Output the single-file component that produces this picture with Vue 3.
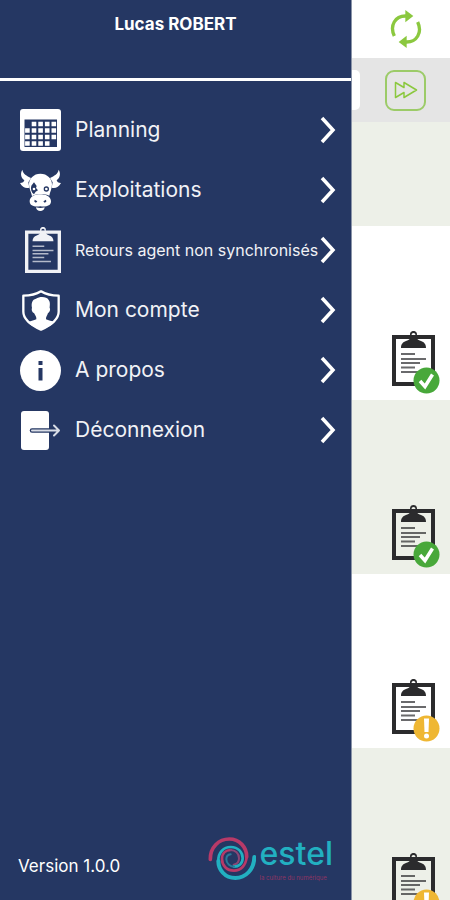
<template>
  <div class="app-shell">
    <svg class="sprite" aria-hidden="true">
      <symbol id="clipboard" viewBox="0 0 43 56">
        <path fill="currentColor" fill-rule="evenodd" d="M0 4H43V55H0ZM4 8V51H39V8Z" />
        <path
          fill="currentColor"
          fill-rule="evenodd"
          d="M9 17C9 13 11 11 14 10C17 9 18 8 18.500 6C17 2 19 0 21.500 0C24 0 26 2 24.500 6C25 8 26 9 29 10C32 11 34 13 34 17ZM21.500 2A2 2 0 1 0 21.500 6A2 2 0 1 0 21.500 2Z"
        />
        <path
          fill="none"
          stroke="currentColor"
          stroke-width="1.800"
          opacity="0.700"
          d="M9 23H23M9 28H34M9 32H28M9 36.500H23M9 41H31"
        />
      </symbol>
    </svg>

    <aside class="drawer">
      <header class="drawer-head">
        <h1>Lucas ROBERT</h1>
      </header>

      <nav class="menu">
        <button v-for="item in items" :key="item.id" type="button" class="menu-item">
          <span class="menu-icon">
            <svg v-if="item.id === 'planning'" width="41" height="42" viewBox="0 0 41 42">
              <rect width="41" height="42" rx="3" fill="#fff" />
              <path fill="#253763" d="M4.500 10.500H37V38H4.500Z" />
              <path stroke="#fff" stroke-width="4.600" stroke-dasharray="4.600 2" d="M11.700 15H36.500M5.100 21.500H36.500M5.100 28H36.500M5.100 34.500H30" />
            </svg>

            <svg v-else-if="item.id === 'farms'" width="41" height="42" viewBox="0 0 123 126">
              <path fill="#fff" d="M7 2C9 15 20 20 33 27L25 40L28 56C16 59 7 54 0 42C8 42 12 39 13 34C3 26 0 14 7 2Z" />
              <path fill="#fff" d="M116 2C114 15 103 20 90 27L98 40L95 56C107 59 116 54 123 42C115 42 111 39 110 34C120 26 123 14 116 2Z" />
              <path fill="#fff" d="M61 14C82 14 96 29 96 46C96 59 90 69 88 80C76 73 47 73 36 82C34 70 27 60 27 46C27 29 41 14 61 14Z" />
              <path fill="#253763" d="M42 40L50 51L48 57L54 64L47 68L42 76C34 70 31 60 34 50Z" />
              <circle cx="42" cy="60" r="4" fill="#fff" />
              <circle cx="79" cy="60" r="8" fill="#253763" />
              <circle cx="79" cy="60" r="4" fill="#fff" />
              <path fill="#fff" d="M61 76C77 74 93 83 93 97C93 112 77 114 61 112C45 114 29 112 29 97C29 83 45 74 61 76Z" />
              <path fill="#253763" d="M44 92L52 97L48 101L43 98ZM78 92L70 97L74 101L79 98Z" />
              <path fill="#fff" d="M48 115Q61 119 74 115C73 123 68 126 61 126S49 123 48 115Z" />
            </svg>

            <svg v-else-if="item.id === 'returns'" class="menu-clipboard" width="36" height="47">
              <use href="#clipboard" />
            </svg>

            <svg v-else-if="item.id === 'account'" width="38" height="41" viewBox="0 0 114 123">
              <path
                fill="none"
                stroke="#fff"
                stroke-width="7"
                stroke-linejoin="round"
                d="M57 4C43 13 24 17 4 17V65C4 91 31 107 57 119C83 107 110 91 110 65V17C90 17 71 13 57 4Z"
              />
              <path
                fill="#fff"
                d="M43 88C44 81 40 77 36 69C30 68 28 58 30 54C27 40 31 28 42 26C53 19 74 19 80 30C86 38 83 48 83 54C86 58 83 67 78 69C76 77 71 81 72 88C79 91 90 93 98 97C86 109 70 115 57 120C43 114 28 108 16 97C24 93 36 92 43 88Z"
              />
            </svg>

            <svg v-else-if="item.id === 'about'" width="41" height="41" viewBox="0 0 41 41">
              <circle cx="20.500" cy="20.500" r="20.500" fill="#fff" />
              <path fill="#253763" d="M18.500 11H22.500V15H18.500ZM18.500 18H22.500V30.500H18.500Z" />
            </svg>

            <svg v-else width="41" height="41" viewBox="0 0 41 41">
              <rect x="1" y="1" width="28" height="39" rx="3" fill="#fff" />
              <path fill="none" stroke="#253763" stroke-width="4.500" stroke-linecap="round" d="M12 20.500H34" />
              <path
                fill="none"
                stroke="#d9dde6"
                stroke-width="2"
                stroke-linecap="round"
                stroke-linejoin="round"
                d="M12 20.500H39M34 15.500L39 20.500L34 25.500"
              />
            </svg>
          </span>

          <span class="menu-label" :class="{ small: item.small }">{{ item.label }}</span>

          <svg class="menu-chevron" width="16" height="28" viewBox="0 0 16 28">
            <path fill="none" stroke="#fff" stroke-width="3.500" d="M2 2L13 14L2 26" />
          </svg>
        </button>
      </nav>

      <footer class="drawer-foot">
        <span class="version">Version 1.0.0</span>
        <div class="brand">
          <svg width="48" height="44" viewBox="0 0 144 132" fill="none" stroke-linecap="round">
            <path stroke="#b83a68" stroke-width="11" d="M7 70C6 34 32 9 64 9C94 9 117 34 116 63" />
            <path stroke="#b83a68" stroke-width="8" d="M116 63C114 88 98 104 78 104C56 104 42 88 42 69C42 52 53 42 68 42" />
            <path stroke="#8a4676" stroke-width="6" d="M68 42C82 42 93 52 93 67C93 78 86 85 77 86" />
            <path stroke="#22b0c1" stroke-width="12" d="M139 63C138 101 113 126 82 126C50 126 31 101 31 75" />
            <path stroke="#22b0c1" stroke-width="8" d="M31 75C30 49 48 33 68 33C91 33 104 49 104 67C104 83 92 92 78 92" />
            <path stroke="#28799a" stroke-width="6" d="M78 92C66 92 55 82 55 70C55 62 60 56 68 55" />
          </svg>
          <div class="brand-text">
            <strong>estel</strong>
            <small>la culture du numérique</small>
          </div>
        </div>
      </footer>
    </aside>

    <main class="page">
      <div class="page-head">
        <button type="button" class="icon-button" aria-label="Synchroniser">
          <svg width="32" height="38" viewBox="0 0 96 114">
            <path fill="none" stroke="#8bc83f" stroke-width="10" d="M13 78C-2 46 16 18 46 18H51M83 36C98 68 80 96 50 96H45" />
            <path fill="#8bc83f" d="M46 0L70 18L46 37ZM50 77L26 96L50 114Z" />
          </svg>
        </button>
      </div>

      <div class="toolbar">
        <div class="field-end"></div>
        <button type="button" class="icon-button framed" aria-label="Suivant">
          <svg width="24" height="18" viewBox="0 0 24 18">
            <path
              fill="none"
              stroke="#8bc83f"
              stroke-width="1.500"
              stroke-linejoin="round"
              d="M1.500 1.500L10 6.500V1.500L22.500 9L10 16.500V11.500L1.500 16.500Z"
            />
          </svg>
        </button>
      </div>

      <ul class="visits">
        <li v-for="visit in visits" :key="visit.id" class="visit" :class="visit.status">
          <svg v-if="visit.status !== 'empty'" width="48" height="63" viewBox="0 0 48 63">
            <use href="#clipboard" width="43" height="56" />
            <template v-if="visit.status === 'done'">
              <circle cx="34.500" cy="49.500" r="13" fill="#48a83a" />
              <path fill="none" stroke="#fff" stroke-width="3.500" d="M28 50L33 55.500L40.500 43.500" />
            </template>
            <template v-else>
              <circle cx="34.500" cy="49.500" r="13" fill="#efb733" />
              <path fill="#fff" d="M32 39.500H37L36.500 53H32.500Z" />
              <circle cx="34.500" cy="57" r="2.500" fill="#fff" />
            </template>
          </svg>
        </li>
      </ul>
    </main>
  </div>
</template>

<script setup>
const items = [
  { id: 'planning', label: 'Planning' },
  { id: 'farms', label: 'Exploitations' },
  { id: 'returns', label: 'Retours agent non synchronisés', small: true },
  { id: 'account', label: 'Mon compte' },
  { id: 'about', label: 'A propos' },
  { id: 'logout', label: 'Déconnexion' }
]

const visits = [
  { id: 1, status: 'empty' },
  { id: 2, status: 'done' },
  { id: 3, status: 'done' },
  { id: 4, status: 'warning' },
  { id: 5, status: 'warning' }
]
</script>

<style>
body {
  margin: 0;
}
</style>

<style scoped>
.app-shell {
  display: flex;
  height: 100vh;
  overflow: hidden;
  font-family: Inter, 'Open Sans', sans-serif;
}

.sprite {
  position: absolute;
  width: 0;
  height: 0;
}

.drawer {
  display: flex;
  flex: 0 0 78%;
  flex-direction: column;
  border-right: 1px solid #8a94a8;
  background: #253763;
  color: #fff;
}

.drawer-head {
  height: 78px;
  border-bottom: 3px solid #fff;
  text-align: center;
}

.drawer-head h1 {
  margin: 12px 0 0;
  font-size: 17px;
  font-weight: 700;
  line-height: 24px;
}

.menu {
  display: flex;
  flex-direction: column;
  padding-top: 19px;
}

.menu-item {
  display: flex;
  align-items: center;
  height: 60px;
  padding: 0 15px 0 20px;
  border: 0;
  background: none;
  color: #f1f2f6;
  font-family: inherit;
  text-align: left;
  cursor: pointer;
}

.menu-icon {
  display: flex;
  flex: 0 0 41px;
  justify-content: center;
  margin-right: 14px;
}

.menu-clipboard {
  margin-left: 5px;
}

.menu-label {
  flex: 1;
  font-size: 21px;
  line-height: 28px;
  white-space: nowrap;
}

.menu-label.small {
  font-size: 16px;
}

.menu-chevron {
  flex: none;
}

.drawer-foot {
  display: flex;
  align-items: center;
  justify-content: space-between;
  margin-top: auto;
  padding: 0 18px 18px 18px;
}

.version {
  padding-top: 16px;
  font-size: 17px;
  line-height: 24px;
}

.brand {
  display: flex;
  align-items: center;
  gap: 4px;
}

.brand-text {
  display: flex;
  flex-direction: column;
}

.brand-text strong {
  color: #22b0c1;
  font-size: 32px;
  font-weight: 500;
  line-height: 40px;
}

.brand-text small {
  color: #8f3563;
  font-size: 6px;
  line-height: 8px;
}

.page {
  flex: 1;
  min-width: 0;
  background: #fff;
}

.page-head {
  display: flex;
  align-items: center;
  justify-content: flex-end;
  height: 58px;
  padding-right: 24px;
}

.toolbar {
  display: flex;
  align-items: center;
  justify-content: space-between;
  height: 64px;
  padding-right: 24px;
  background: #e5e5e5;
}

.field-end {
  width: 8px;
  height: 40px;
  border-radius: 0 5px 5px 0;
  background: #fff;
}

.icon-button {
  display: flex;
  align-items: center;
  justify-content: center;
  box-sizing: border-box;
  width: 41px;
  height: 41px;
  padding: 0;
  border: 0;
  background: none;
  cursor: pointer;
}

.icon-button.framed {
  border: 2px solid #9ccb68;
  border-radius: 9px;
}

.visits {
  margin: 0;
  padding: 0;
  list-style: none;
}

.visit {
  display: flex;
  align-items: flex-end;
  justify-content: flex-end;
  box-sizing: border-box;
  height: 174px;
  padding: 0 10px 6px 0;
  color: #2b2b2d;
}

.visit.empty {
  height: 104px;
}

.visit:nth-child(odd) {
  background: #edf0e8;
}
</style>
